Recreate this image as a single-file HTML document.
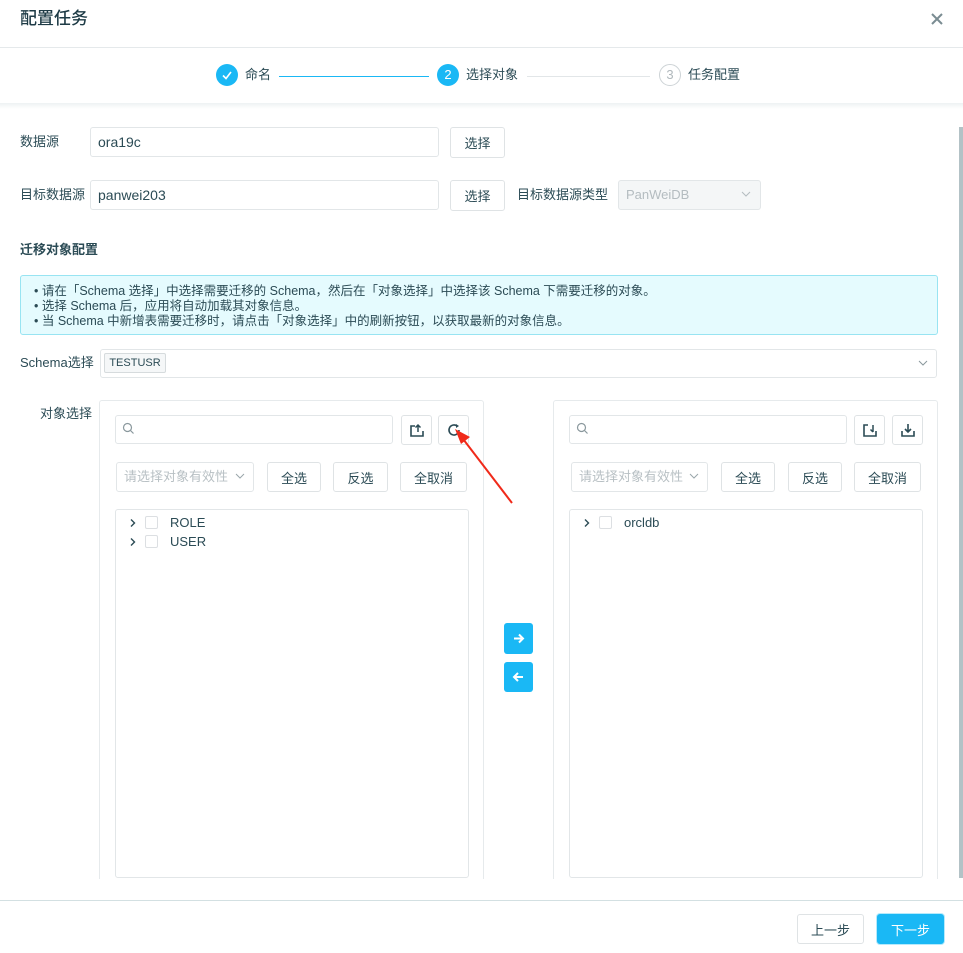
<!DOCTYPE html>
<html><head><meta charset="utf-8"><style>
*{box-sizing:border-box;margin:0;padding:0}
body{width:963px;height:953px;position:relative;overflow:hidden;background:#fff;font-family:"Liberation Sans","Noto Sans CJK SC",sans-serif;color:#2b4b55;font-size:13px}
.a{position:absolute}
.inp{position:absolute;border:1px solid #e2e6e8;border-radius:3px;background:#fff}
.btn{position:absolute;border:1px solid #dfe3e5;border-radius:3px;background:#fff;display:flex;align-items:center;justify-content:center;font-size:13px;color:#2b4b55}
.t{position:absolute;white-space:nowrap;line-height:1}
.cb{position:absolute;width:13px;height:13px;border:1px solid #dcdfe2;border-radius:2px;background:#fff}
.ph{color:#b8c0c4}
</style></head><body>
<div class="t" style="left:20px;top:10px;font-size:17px;color:#1e3b46;font-weight:500">配置任务</div>
<svg class="a" style="left:930px;top:12px" width="14" height="14"><path d="M2 2L12 12M12 2L2 12" stroke="#7a8c92" stroke-width="2"/></svg>
<div class="a" style="left:0;top:47px;width:963px;height:1px;background:#e5e9eb"></div>
<div class="a" style="left:0;top:103px;width:963px;height:6px;background:linear-gradient(#eef2f3,#fff)"></div>
<div class="a" style="left:216px;top:64px;width:22px;height:22px;border-radius:50%;background:#1ab8f5"></div>
<svg class="a" style="left:216px;top:64px" width="22" height="22"><path d="M7 11.5L10 14.5L15 8" stroke="#fff" stroke-width="1.6" fill="none"/></svg>
<div class="t" style="left:245px;top:68px;font-size:13px">命名</div>
<div class="a" style="left:279px;top:76px;width:150px;height:1px;background:#1ab8f5"></div>
<div class="a" style="left:437px;top:64px;width:22px;height:22px;border-radius:50%;background:#1ab8f5;color:#fff;text-align:center;line-height:22px;font-size:13px">2</div>
<div class="t" style="left:466px;top:68px">选择对象</div>
<div class="a" style="left:527px;top:76px;width:123px;height:1px;background:#e2e6e8"></div>
<div class="a" style="left:659px;top:64px;width:22px;height:22px;border-radius:50%;border:1px solid #cdd3d6;color:#b0b8bc;text-align:center;line-height:20px;font-size:13px">3</div>
<div class="t" style="left:688px;top:68px">任务配置</div>

<div class="t" style="left:20px;top:135px">数据源</div>
<div class="inp" style="left:90px;top:127px;width:349px;height:30px"></div>
<div class="t" style="left:98px;top:135px;font-size:14px">ora19c</div>
<div class="btn" style="left:450px;top:127px;width:55px;height:31px">选择</div>
<div class="t" style="left:20px;top:188px">目标数据源</div>
<div class="inp" style="left:90px;top:180px;width:349px;height:30px"></div>
<div class="t" style="left:98px;top:188px;font-size:14px">panwei203</div>
<div class="btn" style="left:450px;top:180px;width:55px;height:31px">选择</div>
<div class="t" style="left:517px;top:188px">目标数据源类型</div>
<div class="inp" style="left:618px;top:180px;width:143px;height:30px;background:#f4f6f7"></div>
<div class="t ph" style="left:626px;top:188px;color:#b4bcc0">PanWeiDB</div>
<svg class="a" style="left:741px;top:190px" width="10" height="8"><path d="M1 2L5 6L9 2" stroke="#b4bcc0" fill="none"/></svg>

<div class="t" style="left:20px;top:243px;font-weight:bold;font-size:13px">迁移对象配置</div>
<div class="a" style="left:20px;top:275px;width:918px;height:60px;background:#e5fbfe;border:1px solid #98e4f2;border-radius:3px"></div>
<div class="t" style="left:34px;top:284px;font-size:12.5px;line-height:15px">• 请在「Schema 选择」中选择需要迁移的 Schema，然后在「对象选择」中选择该 Schema 下需要迁移的对象。<br>• 选择 Schema 后，应用将自动加载其对象信息。<br>• 当 Schema 中新增表需要迁移时，请点击「对象选择」中的刷新按钮，以获取最新的对象信息。</div>

<div class="t" style="left:20px;top:356px">Schema选择</div>
<div class="inp" style="left:100px;top:349px;width:837px;height:29px"></div>
<div class="a" style="left:104px;top:353px;width:62px;height:20px;border:1px solid #d6dbdd;border-radius:2px;background:#f5f7f8;font-size:11px;text-align:center;line-height:18px">TESTUSR</div>
<svg class="a" style="left:918px;top:359px" width="10" height="8"><path d="M1 2L5 6L9 2" stroke="#8a989d" fill="none"/></svg>

<div class="t" style="left:40px;top:407px">对象选择</div>

<!-- left panel -->
<div class="a" style="left:99px;top:400px;width:385px;height:490px;border:1px solid #e6eaec;border-radius:3px"></div>
<div class="inp" style="left:115px;top:415px;width:278px;height:29px"></div>
<svg class="a" style="left:122px;top:422px" width="13" height="13"><circle cx="5.5" cy="5.5" r="4" stroke="#8a989d" fill="none" stroke-width="1.2"/><path d="M8.5 8.5L11.5 11.5" stroke="#8a989d" stroke-width="1.2"/></svg>
<div class="btn" style="left:401px;top:415px;width:31px;height:30px"><svg width="16" height="16"><path d="M6 4H2V14H14V9" stroke="#2b4b55" stroke-width="1.6" fill="none"/><path d="M9 10V3M6.5 5.5L9 3L11.5 5.5" stroke="#2b4b55" stroke-width="1.5" fill="none"/></svg></div>
<div class="btn" style="left:438px;top:415px;width:31px;height:30px"><svg width="16" height="16"><path d="M13 8A5 5 0 1 1 11 4" stroke="#2b4b55" stroke-width="1.6" fill="none"/><path d="M10 2L13 4L10 6Z" fill="#2b4b55"/></svg></div>
<div class="inp" style="left:116px;top:462px;width:138px;height:30px"></div>
<div class="t ph" style="left:124px;top:470px">请选择对象有效性</div>
<svg class="a" style="left:235px;top:472px" width="10" height="8"><path d="M1 2L5 6L9 2" stroke="#9aa6aa" fill="none"/></svg>
<div class="btn" style="left:267px;top:462px;width:54px;height:30px">全选</div>
<div class="btn" style="left:333px;top:462px;width:55px;height:30px">反选</div>
<div class="btn" style="left:400px;top:462px;width:67px;height:30px">全取消</div>
<div class="inp" style="left:115px;top:509px;width:354px;height:369px"></div>
<svg class="a" style="left:129px;top:518px" width="8" height="10"><path d="M2 1.5L5.5 5L2 8.5" stroke="#2b4b55" stroke-width="1.4" fill="none"/></svg>
<div class="cb" style="left:145px;top:516px"></div>
<div class="t" style="left:170px;top:516px;font-size:13px">ROLE</div>
<svg class="a" style="left:129px;top:537px" width="8" height="10"><path d="M2 1.5L5.5 5L2 8.5" stroke="#2b4b55" stroke-width="1.4" fill="none"/></svg>
<div class="cb" style="left:145px;top:535px"></div>
<div class="t" style="left:170px;top:535px;font-size:13px">USER</div>

<!-- arrows -->
<div class="a" style="left:504px;top:623px;width:29px;height:31px;background:#1ab8f5;border-radius:3px"></div>
<svg class="a" style="left:504px;top:623px" width="29" height="31"><path d="M10 15.5H19M15 11.5L19 15.5L15 19.5" stroke="#fff" stroke-width="2" fill="none"/></svg>
<div class="a" style="left:504px;top:662px;width:29px;height:30px;background:#1ab8f5;border-radius:3px"></div>
<svg class="a" style="left:504px;top:662px" width="29" height="30"><path d="M19 15H10M14 11L10 15L14 19" stroke="#fff" stroke-width="2" fill="none"/></svg>

<!-- right panel -->
<div class="a" style="left:553px;top:400px;width:385px;height:490px;border:1px solid #e6eaec;border-radius:3px"></div>
<div class="inp" style="left:569px;top:415px;width:278px;height:29px"></div>
<svg class="a" style="left:576px;top:422px" width="13" height="13"><circle cx="5.5" cy="5.5" r="4" stroke="#8a989d" fill="none" stroke-width="1.2"/><path d="M8.5 8.5L11.5 11.5" stroke="#8a989d" stroke-width="1.2"/></svg>
<div class="btn" style="left:854px;top:415px;width:31px;height:30px"><svg width="16" height="16"><path d="M6 3H2V14H14V9" stroke="#2b4b55" stroke-width="1.6" fill="none"/><path d="M11 3V10M8.5 7.5L11 10" stroke="#2b4b55" stroke-width="1.5" fill="none"/></svg></div>
<div class="btn" style="left:892px;top:415px;width:31px;height:30px"><svg width="16" height="16"><path d="M2 9V14H14V9" stroke="#2b4b55" stroke-width="1.6" fill="none"/><path d="M8 2V10M5 7L8 10L11 7" stroke="#2b4b55" stroke-width="1.6" fill="none"/></svg></div>
<div class="inp" style="left:571px;top:462px;width:137px;height:30px"></div>
<div class="t ph" style="left:579px;top:470px">请选择对象有效性</div>
<svg class="a" style="left:689px;top:472px" width="10" height="8"><path d="M1 2L5 6L9 2" stroke="#9aa6aa" fill="none"/></svg>
<div class="btn" style="left:721px;top:462px;width:54px;height:30px">全选</div>
<div class="btn" style="left:788px;top:462px;width:54px;height:30px">反选</div>
<div class="btn" style="left:854px;top:462px;width:67px;height:30px">全取消</div>
<div class="inp" style="left:569px;top:509px;width:354px;height:369px"></div>
<svg class="a" style="left:583px;top:518px" width="8" height="10"><path d="M2 1.5L5.5 5L2 8.5" stroke="#2b4b55" stroke-width="1.4" fill="none"/></svg>
<div class="cb" style="left:599px;top:516px"></div>
<div class="t" style="left:624px;top:516px;font-size:13px">orcldb</div>

<!-- cover bottom of panels -->
<div class="a" style="left:0;top:879px;width:960px;height:21px;background:#fff"></div>
<div class="a" style="left:959px;top:127px;width:4px;height:751px;background:#b3c2c6"></div>

<!-- red arrow -->
<svg class="a" style="left:440px;top:420px" width="80" height="90"><path d="M72 83L20 15" stroke="#f02a1a" stroke-width="2"/><path d="M15 9L30 17L21 24Z" fill="#f02a1a"/></svg>

<div class="a" style="left:0;top:900px;width:963px;height:1px;background:#d3e0e2"></div>
<div class="btn" style="left:797px;top:914px;width:67px;height:30px">上一步</div>
<div class="btn" style="left:877px;top:914px;width:67px;height:30px;background:#1ab8f5;border-color:#1ab8f5;color:#fff;box-shadow:0 0 0 1px #b5eafc">下一步</div>
</body></html>
